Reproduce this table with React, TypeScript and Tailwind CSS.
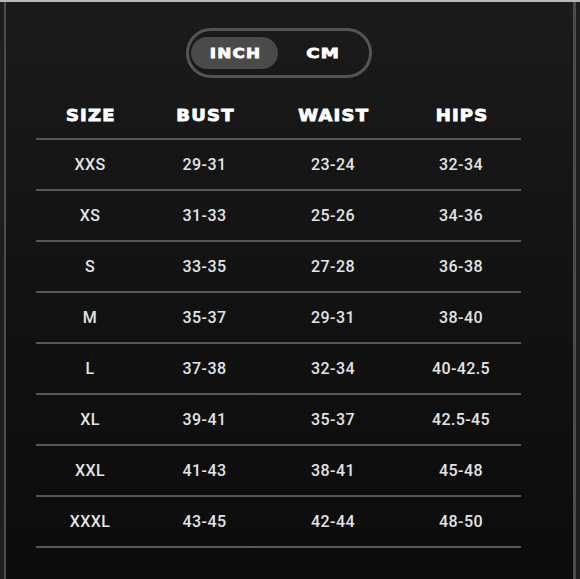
const rows = [
  { size: 'XXS', bust: '29-31', waist: '23-24', hips: '32-34' },
  { size: 'XS', bust: '31-33', waist: '25-26', hips: '34-36' },
  { size: 'S', bust: '33-35', waist: '27-28', hips: '36-38' },
  { size: 'M', bust: '35-37', waist: '29-31', hips: '38-40' },
  { size: 'L', bust: '37-38', waist: '32-34', hips: '40-42.5' },
  { size: 'XL', bust: '39-41', waist: '35-37', hips: '42.5-45' },
  { size: 'XXL', bust: '41-43', waist: '38-41', hips: '45-48' },
  { size: 'XXXL', bust: '43-45', waist: '42-44', hips: '48-50' },
];

// wide, heavy caps for the headings and the toggle
const heading =
  "inline-block font-['DejaVu_Sans',sans-serif] font-bold text-white tracking-[1px] pl-[1px] scale-x-[1.2] [-webkit-text-stroke:0.8px_#fff]";
const cols = 'grid grid-cols-[108px_121px_136px_120px]';

export default function App() {
  return (
    <div className="w-[580px] h-[579px] bg-[#1e1e1e] border-t-2 border-[#b8b8b8] flex">
      <div className="flex-1 ml-[4px] mr-[4px] border-l-2 border-r-[3px] border-[#4c4c4c] bg-gradient-to-b from-[#1b1b1b] via-[#121212] to-[#0c0c0c] pt-[26px]">
        <div className="ml-[180px] w-[186px] h-[50px] rounded-full border-[3px] border-[#545454] flex items-center px-[2px]">
          <div className="w-[87px] h-[32px] rounded-full bg-[#4a4a4a] flex items-center justify-center">
            <span className={`${heading} text-[14px]`}>INCH</span>
          </div>
          <div className="flex-1 flex items-center justify-center">
            <span className={`${heading} text-[14px] scale-x-[1.3]`}>CM</span>
          </div>
        </div>

        <div className="ml-[30px] w-[485px]">
          <div className={`${cols} mt-[25px] h-[24px] items-center mb-[11px]`}>
            <div className="text-center"><span className={`${heading} text-[15px]`}>SIZE</span></div>
            <div className="text-center"><span className={`${heading} text-[15px]`}>BUST</span></div>
            <div className="text-center"><span className={`${heading} text-[15px]`}>WAIST</span></div>
            <div className="text-center"><span className={`${heading} text-[15px]`}>HIPS</span></div>
          </div>
          <div className="border-t-2 border-[#575757]">
            {rows.map((r) => (
              <div
                key={r.size}
                className={`${cols} h-[51px] border-b-2 border-[#575757] items-center font-['Roboto',sans-serif] font-medium text-[16px] tracking-[0.4px] text-[#e4e4e4]`}
              >
                <div className="text-center">{r.size}</div>
                <div className="text-center">{r.bust}</div>
                <div className="text-center">{r.waist}</div>
                <div className="text-center">{r.hips}</div>
              </div>
            ))}
          </div>
        </div>
      </div>
    </div>
  );
}
